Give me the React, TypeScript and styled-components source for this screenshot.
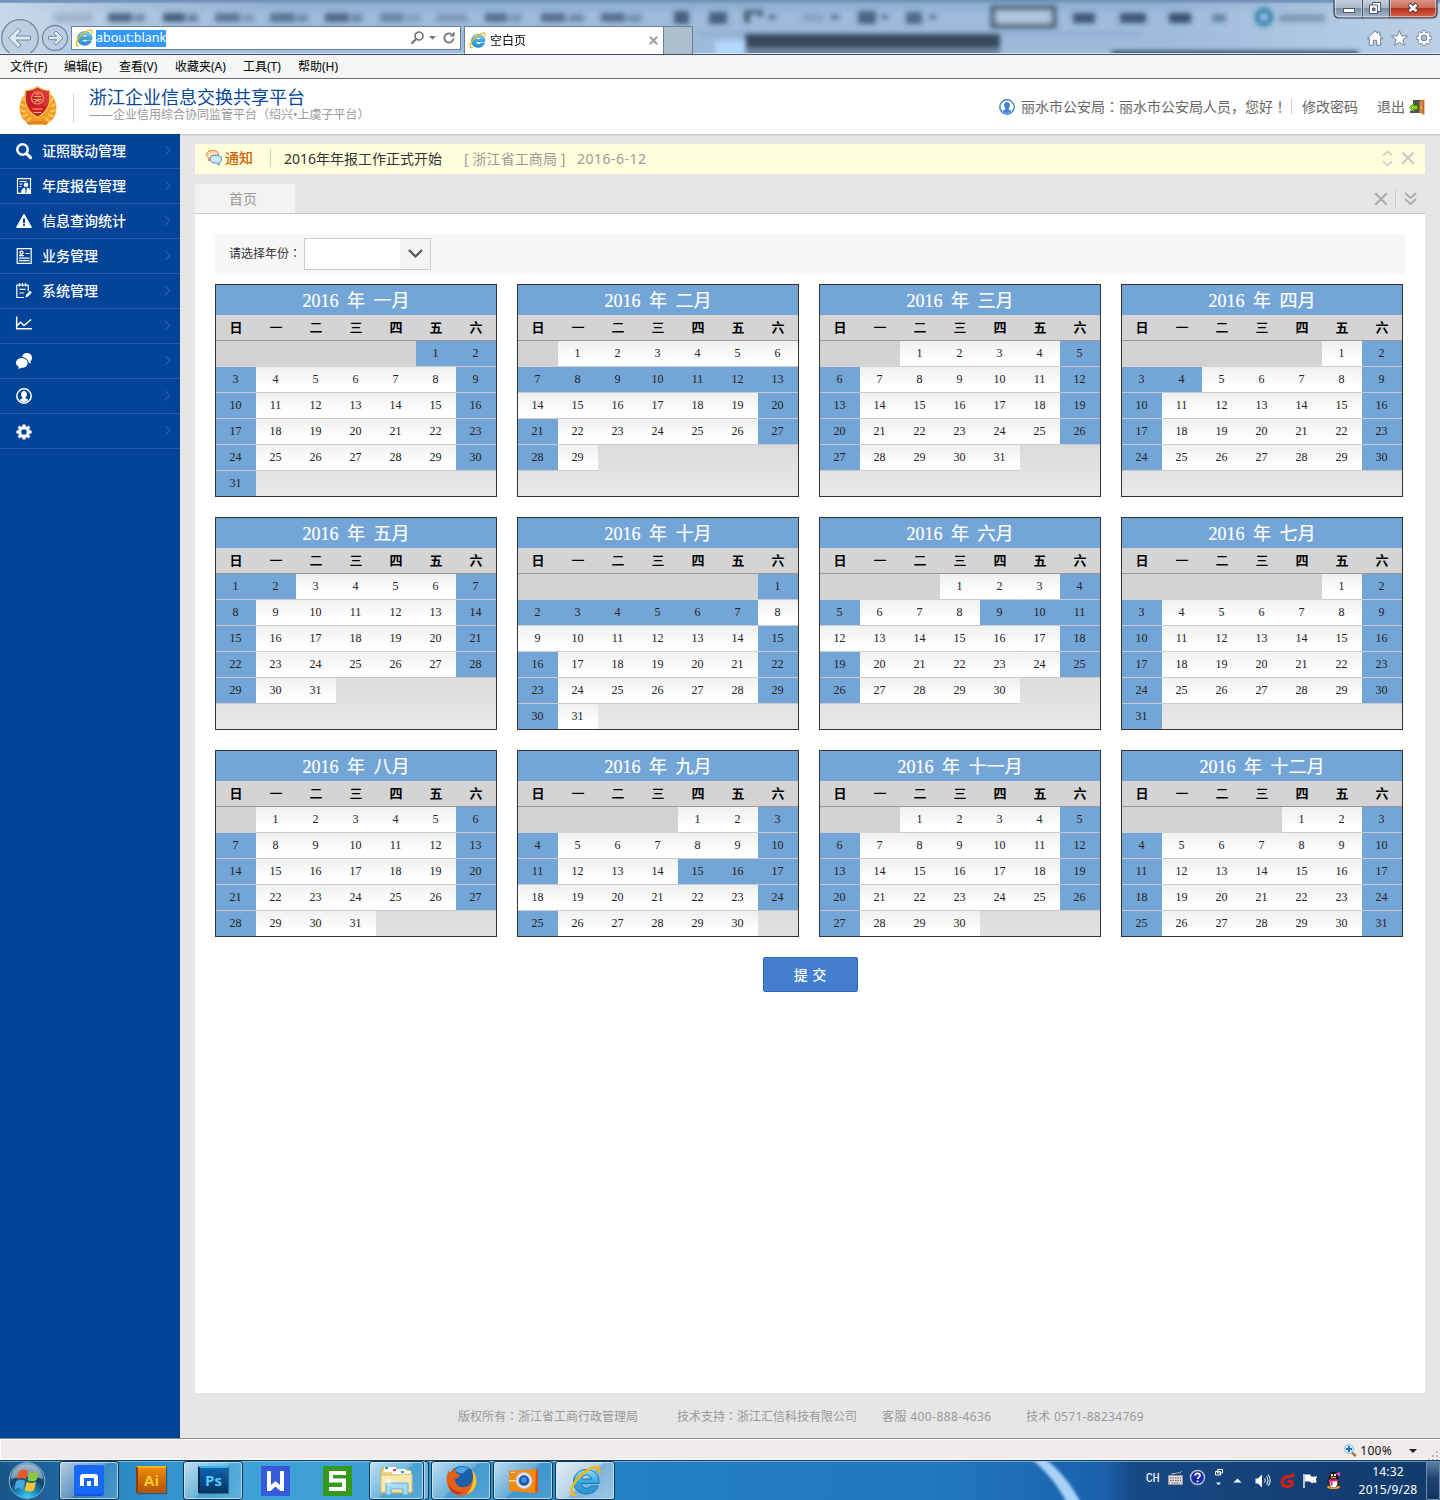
import React from "react";
import styled, { createGlobalStyle, css } from "styled-components";

const sans = `"Noto Sans", "Noto Sans CJK SC", sans-serif`;
const serif = `"Liberation Serif", "Noto Sans CJK SC", serif`;

const Global = createGlobalStyle`
  * { box-sizing: border-box; }
  body { margin: 0; font-family: ${sans}; font-size: 14px; background: #fff; }
  svg { display: block; flex: none; }
`;

const Screen = styled.div`
  width: 1440px;
  height: 1500px;
  display: flex;
  flex-direction: column;
  overflow: hidden;
`;

/* full-width punctuation centred in its cell */
const Punct = styled.span`
  font-family: "Noto Sans CJK TC", sans-serif;
  line-height: 1;
`;

/* ---------- browser chrome ---------- */
const Chrome = styled.div`
  position: relative;
  height: 55px;
  flex: none;
  display: flex;
  align-items: flex-start;
  padding: 26px 8px 0 0;
  border-bottom: 1px solid #3f4c60;
  background: linear-gradient(#6e8fb4 0, #8fb0d3 5px, #9dbbdb 14px, #9dbada 100%);
  overflow: hidden;
`;
const Glass = styled.svg`
  position: absolute;
  left: 0;
  top: 0;
`;
const NavButtons = styled.svg`
  position: relative;
  margin-top: -9px;
`;
const AddressBar = styled.div`
  position: relative;
  width: 390px;
  height: 24px;
  border: 1px solid #6b7f97;
  background: #fff;
  display: flex;
  align-items: center;
  padding: 0 4px 0 3px;
`;
const Url = styled.span`
  margin-left: 3px;
  height: 17px;
  line-height: 16px;
  font-size: 12.5px;
  color: #fff;
  background: #3399ff;
  margin-right: auto;
`;
const BrowserTab = styled.div`
  position: relative;
  margin-left: 3px;
  width: 200px;
  height: 28px;
  border: 1px solid #6b7f97;
  border-bottom: 0;
  background: #fff;
  display: flex;
  align-items: center;
  padding: 0 5px 0 4px;
  font-size: 12px;
  color: #000;
`;
const TabTitle = styled.span`
  margin: 0 auto 0 4px;
  line-height: 16px;
`;
const NewTab = styled.div`
  position: relative;
  width: 29px;
  height: 28px;
  border: 1px solid #6b7f97;
  border-width: 1px 1px 0 0;
  background: #aebfce;
`;
const ChromeTools = styled.div`
  position: relative;
  margin-left: auto;
  margin-top: 4px;
  display: flex;
  gap: 8px;
`;
const WindowButtons = styled.svg`
  position: absolute;
  right: 2px;
  top: 0;
`;
const MenuBar = styled.div`
  height: 24px;
  flex: none;
  background: #f6f6f6;
  border-bottom: 1px solid #6d6d6d;
  display: flex;
  padding-left: 10px;
  font-size: 12px;
  line-height: 24px;
  color: #000;
`;
const MenuEntry = styled.span<{ $w: number }>`
  width: ${(p) => p.$w}px;
  white-space: nowrap;
`;

/* ---------- site header ---------- */
const Header = styled.header`
  height: 55px;
  flex: none;
  background: #fff;
  display: flex;
  align-items: center;
  padding: 0 15px 0 18px;
`;
const Brand = styled.div`
  margin: -3px 0 0 15px;
  padding-left: 16px;
  position: relative;
  &::before {
    content: "";
    position: absolute;
    left: 0;
    top: 5px;
    height: 30px;
    border-left: 1px solid #d4d4d4;
  }
`;
const BrandTitle = styled.div`
  font-size: 18px;
  line-height: 19px;
  color: #05479a;
  white-space: nowrap;
`;
const BrandSub = styled.div`
  font-size: 12px;
  line-height: 15px;
  color: #999;
  white-space: nowrap;
`;
const Account = styled.div`
  margin-left: auto;
  display: flex;
  align-items: center;
  color: #666;
  line-height: 20px;
  white-space: nowrap;
`;
const Greeting = styled.span`
  width: 271px;
  margin-left: 6px;
  border-right: 1px solid #ccc;
  line-height: 15px;
`;
const AccountLink = styled.span<{ $ml: number }>`
  margin-left: ${(p) => p.$ml}px;
`;

/* ---------- body ---------- */
const Body = styled.div`
  height: 1304px;
  flex: none;
  display: flex;
`;
const Sidebar = styled.nav`
  width: 180px;
  background: #034499;
`;
const SideItem = styled.div`
  height: 35px;
  border-bottom: 1px solid #235ba5;
  display: flex;
  align-items: center;
  padding: 0 9px 1px 16px;
  color: #fff;
  font-weight: 500;
`;
const SideLabel = styled.span`
  margin: 0 auto 0 10px;
  line-height: 20px;
  padding-top: 1px;
`;
const Main = styled.main`
  flex: 1;
  background: #e6e6e6;
  border-top: 1px solid #ccc;
  box-shadow: inset 0 1px 0 #dadada;
  padding: 9px 15px 0;
  display: flex;
  flex-direction: column;
`;
const Notice = styled.div`
  height: 30px;
  background: #ffffdd;
  display: flex;
  align-items: center;
  padding: 0 10px 2px 11px;
  white-space: nowrap;
`;
const NoticeTag = styled.span`
  width: 46px;
  margin-left: 3px;
  height: 18px;
  line-height: 17px;
  color: #cc6200;
  font-weight: 500;
  border-right: 1px solid #b9dcae;
  margin-right: 13px;
`;
const NoticeText = styled.span<{ $w: number; $muted?: boolean; $ls?: number }>`
  width: ${(p) => p.$w}px;
  color: ${(p) => (p.$muted ? "#999" : "#333")};
  letter-spacing: ${(p) => p.$ls || 0}px;
`;
const NoticeTools = styled.div`
  margin-left: auto;
  display: flex;
  gap: 8px;
  align-items: center;
`;
const TabStrip = styled.div`
  margin-top: 10px;
  height: 30px;
  flex: none;
  border-bottom: 1px solid #ccc;
  display: flex;
  align-items: center;
  padding-right: 8px;
`;
const PageTab = styled.div`
  width: 100px;
  height: 29px;
  background: #f4f2f3;
  color: #999;
  line-height: 30px;
  padding-left: 34px;
  margin-right: auto;
`;
const StripDivider = styled.i`
  height: 19px;
  border-left: 1px solid #ccc;
  margin: 0 8px 0 7px;
`;
const Panel = styled.section`
  height: 1179px;
  flex: none;
  background: #fff;
  padding: 20px 20px 0;
  display: flex;
  flex-direction: column;
`;
const Filter = styled.div`
  height: 40px;
  flex: none;
  background: #f7f7f7;
  display: flex;
  align-items: center;
  padding-left: 14px;
  font-size: 12px;
  color: #333;
`;
const FilterLabel = styled.label`
  width: 75px;
  padding-bottom: 2px;
`;
const Select = styled.div`
  width: 127px;
  height: 32px;
  border: 1px solid #ccc;
  background: #fff;
  display: flex;
  justify-content: flex-end;
`;
const SelectArrow = styled.span`
  width: 30px;
  background: #f4f4f4;
  display: flex;
  align-items: center;
  justify-content: center;
`;
const Months = styled.div`
  margin-top: 10px;
  display: grid;
  grid-template-columns: repeat(4, 282px);
  gap: 20px;
`;
const Month = styled.div`
  border: 1px solid #333;
  background: linear-gradient(#d3d3d3 0, #d3d3d3 125px, #e9e9e9 211px);
  font-family: ${serif};
`;
const MonthTitle = styled.div`
  height: 30px;
  line-height: 31px;
  background: #74a5d7;
  color: #fff;
  font-size: 18px;
  word-spacing: 4px;
  text-align: center;
  padding-top: 1px;
  -webkit-text-stroke: 0.2px #fff;
`;
const Week = styled.div`
  display: grid;
  grid-template-columns: repeat(7, 40px);
`;
const WeekHead = styled(Week)`
  height: 26px;
  background: #d4d4d4;
  border-bottom: 1px solid #999;
  font-size: 13px;
  line-height: 25px;
  color: #000;
  text-align: center;
`;
const WeekName = styled.span<{ $thin: boolean }>`
  font-weight: ${(p) => (p.$thin ? 500 : 700)};
`;
const Day = styled.div<{ $kind: "blank" | "off" | "work"; $last: boolean }>`
  height: ${(p) => (p.$last ? 25 : 26)}px;
  line-height: 25px;
  text-align: center;
  font-size: 12px;
  color: #222;
  padding-right: 1px;
  ${(p) =>
    p.$kind !== "blank" &&
    css`
      background: ${p.$kind === "off" ? "#74a5d7" : "linear-gradient(#f0f0f0, #fff 80%)"};
      border-bottom: ${p.$last ? "0" : "1px solid #c9cbcd"};
    `}
`;
const Submit = styled.button`
  margin: 20px auto 0;
  position: relative;
  width: 95px;
  height: 35px;
  border: 1px solid #2c65b4;
  border-radius: 2px;
  background: #437fce;
  color: #fff;
  font: 500 14px/33px ${sans};
  word-spacing: 1px;
  padding: 0;
`;
const Footer = styled.footer`
  height: 45px;
  display: flex;
  font-size: 12px;
  line-height: 48px;
  color: #999;
  padding-left: 263px;
  white-space: nowrap;
`;
const FootItem = styled.span<{ $w: number; $ls?: number }>`
  width: ${(p) => p.$w}px;
  letter-spacing: ${(p) => p.$ls || 0}px;
`;

/* ---------- status bar and taskbar ---------- */
const StatusBar = styled.div`
  height: 22px;
  flex: none;
  background: #f0eceb;
  border-top: 1px solid #8b8b8b;
  box-shadow: inset 0 1px 0 #fff, inset 1px 0 0 #fff, inset 0 -1px 0 #fff;
  display: flex;
  align-items: center;
  justify-content: flex-end;
  font-size: 12px;
  color: #111;
  padding: 2px 1px 0 0;
`;
const Zoom = styled.span`
  margin: 0 17px 0 3px;
  line-height: 16px;
  letter-spacing: 0.3px;
`;
const Taskbar = styled.div`
  position: relative;
  height: 40px;
  flex: none;
  display: flex;
  align-items: center;
  border-top: 1px solid #17395c;
  box-shadow: inset 0 1px 0 rgba(160, 210, 240, 0.6);
  background: linear-gradient(
    90deg,
    #1a5589 0, #20659d 55px, #2a8ac6 122px, #3fa2d6 240px, #3d9fd3 360px,
    #2f8fcb 520px, #2280c3 640px, #2076bb 960px, #1b60ad 1105px, #174a86 1130px,
    #15427a 1250px, #123a6b 1440px
  );
`;
const Streak = styled.svg`
  position: absolute;
  left: 1010px;
  top: 0;
`;
const TaskButton = styled.div<{ $w?: number; $ml: number; $look?: "open" | "active" }>`
  position: relative;
  width: ${(p) => p.$w || 60}px;
  height: 39px;
  margin-left: ${(p) => p.$ml}px;
  display: flex;
  align-items: center;
  justify-content: center;
  ${(p) =>
    p.$look &&
    css`
      border: 1px solid #12344f;
      border-radius: 3px;
      box-shadow: inset 0 0 0 1px rgba(215, 238, 250, 0.7);
      background: ${p.$look === "active"
        ? "linear-gradient(135deg, #e4eef6 0, #b5d2e8 48%, #7db2da 52%, #9cc8e6 100%)"
        : "linear-gradient(135deg, rgba(255,255,255,.68) 0, rgba(255,255,255,.28) 48%, rgba(255,255,255,.08) 52%, rgba(255,255,255,.16) 100%)"};
    `}
`;
const StackEdge = styled.i`
  width: 5px;
  height: 39px;
  border: 1px solid #12344f;
  border-left: 1px solid rgba(215, 238, 250, 0.6);
  border-radius: 0 3px 3px 0;
  background: rgba(255, 255, 255, 0.25);
`;
const AppTile = styled.div<{ $edge: string; $face: string; $top: string; $ink: string }>`
  width: 30px;
  height: 27px;
  margin: -3px 0 0 -1px;
  border-top: 2px solid ${(p) => p.$top};
  border-left: 2px solid ${(p) => p.$edge};
  background: ${(p) => p.$face};
  color: ${(p) => p.$ink};
  font: 700 15px/24px "Open Sans", "Noto Sans", sans-serif;
  text-align: center;
  box-shadow: 1px 1px 1px rgba(0, 0, 0, 0.35);
`;
const Tray = styled.div`
  position: relative;
  margin-left: auto;
  height: 39px;
  display: flex;
  align-items: center;
  color: #fff;
`;
const Lang = styled.span`
  font: 12px/16px "Liberation Mono", monospace;
  letter-spacing: -0.6px;
  margin: 0 9px 4px 0;
`;
const Clock = styled.div`
  width: 76px;
  margin-left: 8px;
  font-size: 12px;
  letter-spacing: 0.2px;
  line-height: 18px;
  text-align: center;
  padding-top: 1px;
`;
const ShowDesktop = styled.i`
  width: 14px;
  height: 39px;
  border: 1px solid #6f90b3;
  border-radius: 2px;
  background: linear-gradient(#5c7fa6, #1f436f 45%, #14345f);
`;

/* ---------- icons ---------- */
const IeIcon = ({ s = 16 }: { s?: number }) => (
  <svg width={s} height={s} viewBox="0 0 32 32" fill="none">
    <defs>
      <linearGradient id="ieBlue" x1="0" y1="0" x2="0" y2="1">
        <stop offset="0" stopColor="#8fdcfa" />
        <stop offset=".5" stopColor="#35a8e4" />
        <stop offset="1" stopColor="#2c8ed0" />
      </linearGradient>
    </defs>
    <path
      fillRule="evenodd"
      d="M30 18.500H12.500c.3 3 2.300 4.700 5 4.700 2 0 3.400-.7 4.200-2.200h7.500c-1.500 5-6 8-11.700 8C9.900 29 4.500 24 4.500 16.800S9.900 4.500 17.500 4.500 30 9.800 30 16.500zM22.600 14c-.4-2.500-2.300-4-5-4s-4.600 1.500-5 4z"
      fill="url(#ieBlue)"
      stroke="#1b76b4"
      strokeWidth="1"
    />
    <path d="M29.500 8C31 4 29.500 1.500 26 2 19 3 8 12 3.500 21.500 1 27 2.500 31 7 29.500" stroke="#f2b90f" strokeWidth="2.600" />
  </svg>
);

const Emblem = () => (
  <svg width="40" height="42" viewBox="0 1.500 40 42" fill="none">
    <path d="M7 10C1 16 0 26 4 33c3 5 9 7 15.500 7S33 38 36 33c4-7 3-17-3-23z" fill="#f09a28" />
    <path d="M4 13l4 4M2 19l5 3M2 26l6 1M4 32l6-2M9 37l4-4M36 13l-4 4M38 19l-5 3M38 26l-6 1M36 32l-6-2M31 37l-4-4" stroke="#f8c858" strokeWidth="2" />
    <path d="M8 38c5-2 18-2 23 0l-3 2.500c-5-1-12-1-17 0z" fill="#e58213" />
    <path d="M19.500 1c3 3 8 4.500 12.500 4.500 1.500 9 2 20-12.500 28.500C5 25.500 5.500 14.500 7 5.500 11.500 5.500 16.500 4 19.500 1z" fill="#f3c04a" />
    <path d="M19.500 3c3 2.300 7 3.500 11.200 3.700 1.200 9.500.8 18.500-11.200 25.500C7.500 25.200 7.100 16.200 8.300 6.700c4.200-.2 8.200-1.400 11.200-3.700z" fill="#cb2026" />
    <path d="M19.500 3c3 2.300 7 3.500 11.200 3.700.7 6 .7 11-2.700 15.800-4-4-12-12-14-16.500 2.500-.7 3.500-1.500 5.500-3z" fill="#dd4440" opacity=".7" />
    <circle cx="19.500" cy="13.500" r="6" stroke="#e89060" strokeWidth="1.200" />
    <path d="M16 12h7M15.500 15h8M17.500 9.500h4M17 17.500l2.500-2 2.500 2" stroke="#f0b07a" strokeWidth="1.200" />
    <path d="M14.500 24.500h10M15.500 28h8" stroke="#f0b080" strokeWidth="1.200" />
  </svg>
);

const UserRing = ({ color, s = 16 }: { color: string; s?: number }) => (
  <svg width={s} height={s} viewBox="0 0 16 16">
    <circle cx="8" cy="8" r="7.200" fill="none" stroke={color} strokeWidth="1.400" />
    <path d="M8 3c1.900 0 2.900 1.300 2.900 3.200 0 1.400-.5 2.300-1.200 3v1.300l2.800 1.300C11.500 13.400 9.800 14.200 8 14.200s-3.500-.8-4.500-2.400l2.800-1.300V9.200C5.600 8.500 5.100 7.600 5.100 6.200 5.100 4.300 6.100 3 8 3z" fill={color} />
  </svg>
);

const Door = () => (
  <svg width="16" height="16" viewBox="0 0 16 16">
    <path d="M4 1h9v13H1v-2.500h3z" fill="#55504c" />
    <path d="M10.500 2.500L15.500.3v15.500l-5-2z" fill="#d9893c" />
    <path d="M14.300 1v14.500" stroke="#b5651d" strokeWidth="1" />
    <circle cx="12" cy="8.500" r=".7" fill="#ffe08a" />
    <path d="M.3 8.500L5 4.200v2.600h3.500v3.400H5v2.600z" fill="#8fd32a" stroke="#4f8f0c" strokeWidth=".8" />
  </svg>
);

const Chevron = () => (
  <svg width="7" height="11" viewBox="0 0 7 11" fill="none" stroke="#3a70b5">
    <path d="M1 .8L5.700 5.500 1 10.200" />
  </svg>
);

const Cross = ({ color, s = 14, w = 2 }: { color: string; s?: number; w?: number }) => (
  <svg width={s} height={s} viewBox="0 0 14 14" stroke={color} strokeWidth={w}>
    <path d="M1.300 1.300l11.400 11.400M12.700 1.300L1.300 12.700" />
  </svg>
);

const sideIcons: React.ReactNode[] = [
  <>
    <circle cx="6.500" cy="6.500" r="5.200" fill="none" stroke="#fff" strokeWidth="2.500" />
    <path d="M10.300 10.300l4.300 4.300" stroke="#fff" strokeWidth="3.200" strokeLinecap="round" />
  </>,
  <>
    <path d="M1.500.7h13v14.600h-13z" fill="none" stroke="#fff" strokeWidth="1.200" />
    <path d="M3.500 3.500h7M3.500 6h3M3.500 8.500h2" stroke="#fff" />
    <circle cx="10" cy="6.800" r="2.300" fill="#fff" />
    <path d="M5 15c0-3 1.500-5 3.500-5.500L10 12l1.500-2.500c2 .5 3 2.500 3 5.500z" fill="#fff" />
    <path d="M3 12.500h2M10 11v4" stroke="#034499" />
  </>,
  <>
    <path d="M8 1.200l7.500 13.300H.5z" fill="#fff" stroke="#fff" strokeLinejoin="round" />
    <path d="M8 5.500v4.800M8 11.300v1.700" stroke="#034499" strokeWidth="2" />
  </>,
  <>
    <path d="M1.200.7h14v14.600h-14z" fill="none" stroke="#fff" strokeWidth="1.200" />
    <circle cx="5.500" cy="4.700" r="1.500" fill="none" stroke="#fff" strokeWidth="1.300" />
    <path d="M3 7.700h5M9.500 5.500h4M3 10.200h10.500M3 12.700h10.500" stroke="#fff" strokeWidth="1.200" />
  </>,
  <>
    <path d="M8 14.500H.8V2.200h11.400V8M3.500 0v3.500M6.500 0v3.500M9.500 0v3.500M3.500 6.300h6M3.500 10h4.500" fill="none" stroke="#fff" strokeWidth="1.200" />
    <path d="M9.500 14.500l.8-3L14 7.800l1.800 1.700-3.700 4z" fill="#fff" />
  </>,
  <path d="M.7 0v12.300H16M1 9l3.500-3.300L8 9l7-6" transform="translate(0 -.5)" fill="none" stroke="#fff" strokeWidth="1.500" />,
  <>
    <path d="M10.500 0C13.800 0 16 2 16 4.700c0 1.600-.8 2.900-1.700 3.700l.7 2.100-2.800-1c-.7-3-3-5-6.200-5.200C6.500 1.600 8 0 10.500 0z" fill="#fff" />
    <path d="M5.500 5c3.700 0 6.200 2.200 6.200 5s-2.500 4.800-6 4.800L2.500 16l.3-2.300C1 12.800 0 11.500 0 10c0-2.800 2.300-5 5.500-5z" fill="#fff" />
    <path d="M5.500 4.500c3.700.2 6.500 2.200 6.800 5.500" fill="none" stroke="#034499" strokeWidth=".8" />
  </>,
  <>
    <circle cx="8" cy="8" r="7.200" fill="none" stroke="#fff" strokeWidth="1.500" />
    <path d="M8 3c1.900 0 2.900 1.300 2.900 3.200 0 1.400-.5 2.300-1.200 3v1.300l2.800 1.300C11.500 13.400 9.800 14.200 8 14.200s-3.500-.8-4.500-2.400l2.800-1.300V9.200C5.600 8.500 5.100 7.600 5.100 6.200 5.100 4.300 6.100 3 8 3z" fill="#fff" />
  </>,
  <>
    <circle cx="8" cy="8" r="4.400" fill="none" stroke="#fff" strokeWidth="3.200" />
    <path d="M8 .4v3M8 12.600v3M.4 8h3M12.600 8h3M2.600 2.600l2.200 2.200M11.200 11.200l2.200 2.200M2.600 13.400l2.200-2.200M11.200 4.800l2.200-2.200" stroke="#fff" strokeWidth="3" />
  </>,
];

const sideOffsets = [0, 0, 0, 0, 0, -2, 0, 1, 2];
const sideLabels = ["证照联动管理", "年度报告管理", "信息查询统计", "业务管理", "系统管理", "", "", "", ""];

const SideGlyph = styled.svg<{ $dy: number }>`
  margin-top: ${(p) => p.$dy}px;
  overflow: visible;
`;

/* ---------- data ---------- */
type MonthData = { name: string; first: number; days: number; rows: number; off?: number[]; work?: number[] };
const months: MonthData[] = [
  { name: "一月", first: 5, days: 31, rows: 6, off: [1] },
  { name: "二月", first: 1, days: 29, rows: 6, off: [8, 9, 10, 11, 12], work: [6, 14] },
  { name: "三月", first: 2, days: 31, rows: 6 },
  { name: "四月", first: 5, days: 30, rows: 6, off: [4] },
  { name: "五月", first: 0, days: 31, rows: 6, off: [2] },
  { name: "十月", first: 6, days: 31, rows: 6, off: [3, 4, 5, 6, 7], work: [8, 9] },
  { name: "六月", first: 3, days: 30, rows: 6, off: [9, 10], work: [12] },
  { name: "七月", first: 5, days: 31, rows: 6 },
  { name: "八月", first: 1, days: 31, rows: 5 },
  { name: "九月", first: 4, days: 30, rows: 5, off: [15, 16], work: [18] },
  { name: "十一月", first: 2, days: 30, rows: 5 },
  { name: "十二月", first: 4, days: 31, rows: 5 },
];
const weekdays = ["日", "一", "二", "三", "四", "五", "六"];

const MonthCard = ({ m }: { m: MonthData }) => (
  <Month>
    <MonthTitle>2016 年 {m.name}</MonthTitle>
    <WeekHead>
      {weekdays.map((d, i) => (
        <WeekName key={d} $thin={i > 0 && i < 4}>
          {d}
        </WeekName>
      ))}
    </WeekHead>
    <Week>
      {Array.from({ length: m.rows * 7 }, (_, i) => {
        const day = i - m.first + 1;
        const last = i >= (m.rows - 1) * 7;
        if (day < 1 || day > m.days) return <Day key={i} $kind="blank" $last={last} />;
        const weekend = i % 7 === 0 || i % 7 === 6;
        const off = (weekend && !m.work?.includes(day)) || m.off?.includes(day);
        return (
          <Day key={i} $kind={off ? "off" : "work"} $last={last}>
            {day}
          </Day>
        );
      })}
    </Week>
  </Month>
);

const blurMarks: [number, number, number, number, number][] = [
  [54, 13, 38, 9, 0.2], [108, 13, 24, 9, 0.75], [134, 14, 11, 8, 0.45], [163, 13, 22, 9, 0.8], [187, 14, 11, 8, 0.5],
  [215, 13, 25, 9, 0.6], [242, 14, 12, 8, 0.3], [270, 13, 25, 9, 0.6], [297, 14, 11, 8, 0.4], [325, 13, 24, 9, 0.7],
  [351, 14, 11, 8, 0.45], [380, 13, 24, 9, 0.45], [406, 14, 14, 8, 0.25], [437, 14, 30, 8, 0.3],
  [485, 13, 22, 9, 0.65], [509, 14, 13, 8, 0.3], [541, 13, 24, 9, 0.65], [568, 14, 16, 8, 0.4],
  [601, 13, 24, 9, 0.65], [627, 14, 15, 8, 0.35], [674, 11, 15, 13, 0.8], [709, 12, 18, 12, 0.8], [768, 15, 8, 4, 0.7], [802, 14, 22, 7, 0.2],
  [831, 15, 8, 4, 0.7], [858, 11, 18, 13, 0.75], [881, 15, 7, 4, 0.7], [906, 12, 16, 12, 0.7], [929, 15, 7, 4, 0.7],
  [1073, 13, 22, 10, 0.85], [1120, 13, 26, 10, 0.85], [1169, 13, 22, 10, 0.9], [1212, 14, 14, 8, 0.5], [1279, 14, 46, 8, 0.35],
];

export default function App() {
  return (
    <Screen>
      <Global />
      <Chrome>
        <Glass width="1440" height="54" viewBox="0 0 1440 54">
          <defs>
            <filter id="soft" x="-5%" y="-50%" width="110%" height="200%">
              <feGaussianBlur stdDeviation="2.600" />
            </filter>
            <linearGradient id="sheen">
              <stop offset="0" stopColor="#d5e1ee" stopOpacity=".8" />
              <stop offset=".1" stopColor="#d0deee" stopOpacity=".3" />
              <stop offset=".2" stopColor="#d0deee" stopOpacity="0" />
              <stop offset=".8" stopColor="#d0deee" stopOpacity="0" />
              <stop offset="1" stopColor="#cfdeef" stopOpacity=".6" />
            </linearGradient>
          </defs>
          <rect y="3" width="1440" height="51" fill="url(#sheen)" />
          <g filter="url(#soft)">
            {blurMarks.map(([x, y, w, h, o]) => (
              <rect key={x} x={x} y={y} width={w} height={h} fill="#2e4765" opacity={o} />
            ))}
            <path d="M746 22V12h15v5M748 14v9" fill="none" stroke="#33475f" strokeWidth="4" opacity=".8" />
            <rect x="993" y="8" width="61" height="18" fill="#b7c9de" stroke="#33475f" strokeWidth="5" opacity=".8" />
            <rect x="700" y="33" width="440" height="1.500" fill="#6688ad" opacity=".6" />
            <rect x="715" y="41" width="30" height="14" fill="#b4d8ff" />
            <rect x="745" y="34" width="255" height="14" fill="#38495c" />
            <rect x="745" y="48" width="255" height="8" fill="#6e839e" />
            <rect x="1112" y="51" width="246" height="8" fill="#33475f" />
            <circle cx="1264" cy="17" r="7" fill="none" stroke="#227ba9" strokeWidth="4.500" />
            <rect x="60" y="50" width="500" height="3" fill="#9dc8f5" />
          </g>
          <rect y="53" width="1440" height="1" fill="#dce6f2" />
        </Glass>
        <NavButtons width="71" height="36" viewBox="0 17 71 36" fill="none">
          <circle cx="20" cy="38" r="18.300" fill="#b8c9dc" fillOpacity=".55" stroke="#74899f" strokeWidth="1.300" />
          <circle cx="55" cy="38" r="12.500" fill="#b8c9dc" fillOpacity=".55" stroke="#74899f" strokeWidth="1.300" />
          <path d="M8.500 38l9.500-9.700 3 2.700-5 5h14.500v4H16l5 5-3 2.700z" fill="#e1e8f0" stroke="#7388a2" strokeLinejoin="round" />
          <path d="M63 38l-7-7-2.300 2.300 3 3h-8.200v3.400h8.200l-3 3L56 45z" fill="#e1e8f0" stroke="#7388a2" strokeLinejoin="round" />
        </NavButtons>
        <AddressBar>
          <IeIcon s={18} />
          <Url>about:blank</Url>
          <svg width="46" height="16" viewBox="0 0 46 16" fill="none" stroke="#777">
            <circle cx="9" cy="6" r="4" strokeWidth="1.700" />
            <path d="M6 9l-4.500 4.700" strokeWidth="2.200" />
            <path d="M19 6h7l-3.500 3.800z" fill="#777" stroke="none" />
            <path d="M43.500 8.500a4.600 4.600 0 1 1-2-4.300" strokeWidth="1.900" />
            <path d="M44.500 1.500v5h-5z" fill="#777" stroke="none" />
          </svg>
        </AddressBar>
        <BrowserTab>
          <IeIcon s={17} />
          <TabTitle>空白页</TabTitle>
          <Cross color="#a2a2a2" s={9} w={3.4} />
        </BrowserTab>
        <NewTab />
        <ChromeTools>
          <svg width="16" height="16" viewBox="0 0 16 16" fill="#fff" stroke="#66778c" strokeWidth=".9">
            <path d="M8 .8l2.500 2.500V2h2.300v3.500L15.600 8.500h-2v6.800H9.700v-5H6.300v5H2.400V8.500h-2z" />
          </svg>
          <svg width="17" height="16" viewBox="0 0 17 16" fill="#fff" stroke="#66778c" strokeWidth=".9">
            <path d="M8.500.6l2.100 5.200 5.800.3-4.500 3.700 1.500 5.600-4.900-3.100-4.900 3.100 1.500-5.600L.6 6.100l5.800-.3z" />
          </svg>
          <svg width="16" height="16" viewBox="0 0 16 16" fill="none">
            <path d="M8 .2v15.600M.2 8h15.600M2.500 2.500l11 11M13.500 2.500l-11 11" stroke="#77879b" strokeWidth="3.600" />
            <circle cx="8" cy="8" r="4.400" stroke="#77879b" strokeWidth="4" />
            <path d="M8 .9v3M8 12v3M.9 8h3M12 8h3M3 3l2 2M11 11l2 2M13 3l-2 2M5 11l-2 2" stroke="#fff" strokeWidth="2.200" />
            <circle cx="8" cy="8" r="4.400" stroke="#fff" strokeWidth="2.400" />
            <circle cx="8" cy="8" r="2.700" fill="#9dbbdb" stroke="#77879b" strokeWidth=".7" />
          </svg>
        </ChromeTools>
        <WindowButtons width="105" height="19" viewBox="0 0 105 19" fill="none">
          <defs>
            <linearGradient id="ctl" x1="0" y1="0" x2="0" y2="1">
              <stop offset="0" stopColor="#c8d3df" />
              <stop offset=".45" stopColor="#a8b8ca" />
              <stop offset=".5" stopColor="#7c90a8" />
              <stop offset="1" stopColor="#a7bace" />
            </linearGradient>
            <linearGradient id="cls" x1="0" y1="0" x2="0" y2="1">
              <stop offset="0" stopColor="#dd9b8e" />
              <stop offset=".45" stopColor="#c96a58" />
              <stop offset=".5" stopColor="#b53020" />
              <stop offset="1" stopColor="#d9694a" />
            </linearGradient>
          </defs>
          <path d="M1-1v14q0 5 5 5h51V-1z" fill="url(#ctl)" />
          <path d="M57-1v19h42q5 0 5-5V-1z" fill="url(#cls)" />
          <path d="M1-1v14q0 5 5 5h93q5 0 5-5V-1M29.500 0v18M56.500 0v18" stroke="#39485c" strokeWidth="1.200" />
          <path d="M30.500 0v17M28.500 0v17M57.500 0v17M2.500 0v13q0 3.500 3.500 3.500h93q3.500 0 3.500-3.500V0" stroke="#dfe7ee" strokeOpacity=".6" />
          <rect x="10.500" y="8.500" width="11" height="4" fill="#fff" stroke="#4b586c" />
          <path d="M39.500 2.500h8v9h-8z" fill="#fff" stroke="#4b586c" />
          <path d="M36.500 5h8v8.500h-8z" fill="#fff" stroke="#4b586c" />
          <path d="M39.500 8h2.500v2.500h-2.500z" fill="#7c90a8" stroke="#4b586c" />
          <path d="M76 4.200l8 7.600M84 4.200l-8 7.600" stroke="#573036" strokeWidth="4.500" />
          <path d="M76.500 4.700l7 6.600M83.500 4.700l-7 6.600" stroke="#fff" strokeWidth="2.600" />
        </WindowButtons>
      </Chrome>
      <MenuBar>
        <MenuEntry $w={54}>文件(F)</MenuEntry>
        <MenuEntry $w={55}>编辑(E)</MenuEntry>
        <MenuEntry $w={56}>查看(V)</MenuEntry>
        <MenuEntry $w={68}>收藏夹(A)</MenuEntry>
        <MenuEntry $w={55}>工具(T)</MenuEntry>
        <MenuEntry $w={55}>帮助(H)</MenuEntry>
      </MenuBar>

      <Header>
        <Emblem />
        <Brand>
          <BrandTitle>浙江企业信息交换共享平台</BrandTitle>
          <BrandSub>——企业信用综合协同监管平台（绍兴•上虞子平台）</BrandSub>
        </Brand>
        <Account>
          <UserRing color="#3f82d8" />
          <Greeting>
            丽水市公安局<Punct lang="zh-TW">：</Punct>丽水市公安局人员，您好<Punct lang="zh-TW">！</Punct>
          </Greeting>
          <AccountLink $ml={10}>修改密码</AccountLink>
          <AccountLink $ml={19}>退出</AccountLink>
          <AccountLink $ml={4}>
            <Door />
          </AccountLink>
        </Account>
      </Header>

      <Body>
        <Sidebar>
          {sideIcons.map((icon, i) => (
            <SideItem key={i}>
              <SideGlyph $dy={sideOffsets[i]} width="16" height="16" viewBox="0 0 16 16">
                {icon}
              </SideGlyph>
              <SideLabel>{sideLabels[i]}</SideLabel>
              <Chevron />
            </SideItem>
          ))}
        </Sidebar>
        <Main>
          <Notice>
            <svg width="16" height="16" viewBox="0 0 16 16">
              <path d="M5.500.6h2.800c2.400 0 4 1.600 4 3.700s-1.600 4.200-4 4.200H5L2.800 11V8C1.300 7.300.6 6 .6 4.500.6 2.200 2.700.6 5.500.6z" fill="#ffe0a8" stroke="#e8703c" />
              <path d="M8.500 5.300H11c2.700 0 4.500 1.600 4.500 3.900 0 1.700-.9 3-2.300 3.600v2.500L10.700 13H8.500c-2.700 0-4.400-1.600-4.400-3.900s1.700-3.800 4.400-3.800z" fill="#cdeaff" stroke="#3484cc" />
            </svg>
            <NoticeTag>通知</NoticeTag>
            <NoticeText $w={180}>2016年年报工作正式开始</NoticeText>
            <NoticeText $w={113} $muted $ls={0.1}>[ 浙江省工商局 ]</NoticeText>
            <NoticeText $w={80} $muted $ls={0.5}>2016-6-12</NoticeText>
            <NoticeTools>
              <svg width="11" height="17" viewBox="0 0 11 17" fill="none" stroke="#c4c4c4" strokeWidth="1.300">
                <path d="M1.200 5.500l4.300-4 4.300 4M1.200 11.500l4.300 4 4.300-4" />
              </svg>
              <Cross color="#c8c8c8" />
            </NoticeTools>
          </Notice>
          <TabStrip>
            <PageTab>首页</PageTab>
            <Cross color="#adadad" w={2.2} />
            <StripDivider />
            <svg width="13" height="14" viewBox="0 0 13 14" fill="none" stroke="#adadad" strokeWidth="2">
              <path d="M1 1l5.500 5L12 1M1 7l5.500 5L12 7" />
            </svg>
          </TabStrip>
          <Panel>
            <Filter>
              <FilterLabel>
                请选择年份<Punct lang="zh-TW">：</Punct>
              </FilterLabel>
              <Select>
                <SelectArrow>
                  <svg width="15" height="10" viewBox="0 0 15 10" fill="none" stroke="#555" strokeWidth="2.200">
                    <path d="M1 1l6.500 6.500L14 1" />
                  </svg>
                </SelectArrow>
              </Select>
            </Filter>
            <Months>
              {months.map((m) => (
                <MonthCard key={m.name} m={m} />
              ))}
            </Months>
            <Submit>提 交</Submit>
          </Panel>
          <Footer>
            <FootItem $w={219}>
              版权所有<Punct lang="zh-TW">：</Punct>浙江省工商行政管理局
            </FootItem>
            <FootItem $w={205}>
              技术支持<Punct lang="zh-TW">：</Punct>浙江汇信科技有限公司
            </FootItem>
            <FootItem $w={144} $ls={0.4}>客服 400-888-4636</FootItem>
            <FootItem $w={130} $ls={0.28}>技术 0571-88234769</FootItem>
          </Footer>
        </Main>
      </Body>

      <StatusBar>
        <svg width="13" height="13" viewBox="0 0 13 13">
          <path d="M7.500 8l4.300 4.200" stroke="#b0713a" strokeWidth="2.400" />
          <circle cx="5" cy="5" r="4.500" fill="#d8ecfb" stroke="#9ab8cf" />
          <path d="M5 2v6M2 5h6" stroke="#1373c4" strokeWidth="2" />
        </svg>
        <Zoom>100%</Zoom>
        <svg width="30" height="18" viewBox="0 0 30 18">
          <path d="M0 7h8l-4 4z" fill="#222" />
          <path d="M27 9h2v2h-2zM23 13h2v2h-2zM27 13h2v2h-2zM19 17h2v1h-2zM23 17h2v1h-2zM27 17h2v1h-2z" fill="#bbb" />
        </svg>
      </StatusBar>

      <Taskbar>
        <Streak width="110" height="39" viewBox="0 0 110 39">
          <defs>
            <filter id="glow" x="-20%" y="-20%" width="140%" height="140%">
              <feGaussianBlur stdDeviation="1.600" />
            </filter>
          </defs>
          <path d="M19-4C34 8 47 22 58 44h14C62 24 50 9 33-4z" fill="#a9d2f8" filter="url(#glow)" />
        </Streak>
        <svg width="54" height="39" viewBox="0 0 54 39">
          <defs>
            <radialGradient id="orb" cx=".5" cy="1" r="1">
              <stop offset="0" stopColor="#39d8f8" />
              <stop offset=".35" stopColor="#1b7fb0" />
              <stop offset=".6" stopColor="#0e4169" />
              <stop offset="1" stopColor="#7e9fb8" />
            </radialGradient>
          </defs>
          <circle cx="27" cy="19.500" r="17.800" fill="url(#orb)" stroke="#7fb2d4" />
          <path d="M11 18C12 8 19 3.500 27 3.500S42 8 43 18c-9-3-23-3-32 0z" fill="#dfeaf2" opacity=".45" />
          <path d="M19 10c3-2 6-2 9 0l-2.200 8.500c-3-2-6-2-9 0z" fill="#e8582c" />
          <path d="M29.500 10.700c3 1.800 6 1.800 9.500 0l-2.300 8.300c-3.300 1.700-6.300 1.800-9.300 0z" fill="#8ac83e" />
          <path d="M16.200 20c3-2 6-2 9 0L23 28.500c-3-2-6-2-9 0z" fill="#4aa5e0" />
          <path d="M26.800 20.800c3 1.700 6 1.700 9.300 0L34 29.200c-3.300 1.800-6.300 1.700-9.300 0z" fill="#fcc52c" />
        </svg>
        <TaskButton $ml={5} $look="open">
          <svg width="30" height="31" viewBox="0 0 30 31">
            <rect width="30" height="31" rx="3" fill="#0d55dd" />
            <rect width="30" height="29" rx="3" fill="#1768f7" />
            <path d="M6 21V12q0-3 3-3h12q3 0 3 3v9h-4v-8H10v8zM13 16h4v5h-4z" fill="#fff" />
          </svg>
        </TaskButton>
        <TaskButton $ml={2}>
          <AppTile $edge="#8f3c05" $top="#f9b51c" $face="linear-gradient(#ea8a08,#b3510a)" $ink="#ffc82e">Ai</AppTile>
        </TaskButton>
        <TaskButton $ml={2} $look="open">
          <AppTile $edge="#04284a" $top="#33b5ee" $face="linear-gradient(#0b63ac,#063463)" $ink="#55c9f7">Ps</AppTile>
        </TaskButton>
        <TaskButton $ml={2}>
          <svg width="29" height="30" viewBox="0 0 29 30">
            <rect width="29" height="30" fill="#355bdc" />
            <path d="M6 5h4v14l4.500-4 4.500 4V5h4v20h-3.500l-5-4.500-5 4.500H6z" fill="#fff" />
          </svg>
        </TaskButton>
        <TaskButton $ml={2}>
          <svg width="29" height="30" viewBox="0 0 29 30">
            <rect width="29" height="30" fill="#359a1c" />
            <path d="M23 7H8v7.500h13V23H6" fill="none" stroke="#fff" strokeWidth="4" />
          </svg>
        </TaskButton>
        <TaskButton $ml={2} $w={55} $look="open">
          <svg width="33" height="31" viewBox="0 0 33 31">
            <path d="M1 5q0-2 2-2h4l1 1h7l1 1h13q2 0 2 2v21H1z" fill="#ecd385" stroke="#c9a850" />
            <path d="M4 2h12v5H4zM12 4h14v5H12zM19 6h12v4H19z" fill="#fff" />
            <path d="M5 2h3v2H5z" fill="#3a3" />
            <path d="M13 4h3v2h-3z" fill="#d43" />
            <path d="M21 6h3v2h-3z" fill="#39d" />
            <path d="M1 10h19l2-1h10v18H1z" fill="#f6e9ab" stroke="#dcc377" />
            <path d="M6 30V18h22v12h-5v-6H11v6z" fill="#a5dbf2" stroke="#65aeda" />
            <path d="M9 12v9M4.500 16.500h9M6 13.500l6 6M12 13.500l-6 6" stroke="#fff" strokeWidth=".8" />
          </svg>
        </TaskButton>
        <StackEdge />
        <TaskButton $ml={2} $look="open">
          <svg width="31" height="31" viewBox="0 0 31 31">
            <circle cx="16" cy="14.500" r="13.500" fill="#1a5fa8" />
            <path d="M9 5c3-4 10-4 14-1-4 0-3 3-6 4s-6-1-8-3z" fill="#4fa5dd" />
            <path d="M26 5c5 5 6 13 2 19-5 7-16 9-22 3C0 22-1 13 3 5c0 2 1 3 2 3 1-2 3-4 5-4-1 3 0 5 4 6-1 3-4 3-5 4 0 6 5 9 9 8 7 0 11-8 8-17z" fill="#e65f17" />
            <path d="M26 5c5 5 6 13 2 19-2 3-5 4.500-8 5.500 6-5 9-15 6-24.500z" fill="#fbc53a" />
            <path d="M3 19c3 6 9 9 15 8-3 3-9 3-13-1-1-2-2-4-2-7z" fill="#c8391b" />
          </svg>
        </TaskButton>
        <TaskButton $ml={2} $look="open">
          <svg width="31" height="26" viewBox="0 0 31 26">
            <path d="M1 3l27-2 2 1v22l-3 1-26-2z" fill="#f58a12" />
            <path d="M28 1l2 1v22l-3 1z" fill="#d7540a" />
            <path d="M3 4h4v1H3zM1 12h9v1.500H1z" fill="#ffe6b0" />
            <circle cx="16" cy="12.500" r="8" fill="#e6ebf0" stroke="#b6bec8" />
            <circle cx="16" cy="12.500" r="5.200" fill="#1d4f9e" stroke="#6d8bb5" />
            <circle cx="16" cy="12" r="3" fill="#3f8df0" />
          </svg>
        </TaskButton>
        <TaskButton $ml={2} $look="active">
          <IeIcon s={32} />
        </TaskButton>

        <Tray>
          <Lang>CH</Lang>
          <svg width="96" height="39" viewBox="1168 1461 96 39" fill="none">
            <path d="M1168.500 1475.500h14v9h-14z" fill="#d8d8d8" stroke="#999" />
            <path d="M1170 1478h11M1170 1480.500h11M1171.500 1483h8" stroke="#666" strokeDasharray="1.500 1" />
            <path d="M1172 1475v-1.500h4l2-1 2 .5 2-2" stroke="#aab" />
            <circle cx="1197.500" cy="1477.500" r="7" fill="#1a28b0" stroke="#b8bfc9" strokeWidth="1.500" />
            <path d="M1195 1475.800c.2-3.200 5.200-3 5-.2-.2 1.500-2.400 1.600-2.400 3.500M1197.600 1480.500v1.800" stroke="#fff" strokeWidth="1.700" />
            <path d="M1217.500 1469.500h5v3.500h-5zM1215.500 1471.500h5v3.500h-5z" fill="#15427a" stroke="#fff" />
            <path d="M1216 1482.500h5l-2.500 2.700zM1233.500 1482.500h8l-4-4z" fill="#fff" />
            <path d="M1255.500 1478.500h2.500l4-4v13l-4-4h-2.500z" fill="#fff" />
          </svg>
          <svg width="78" height="39" viewBox="1264 1461 78 39" fill="none">
            <path d="M1264.500 1478.500q1.500 2 0 4M1266.500 1476.500q3 4 0 8M1268 1474.500q4.500 6 0 11.500" stroke="#dfe8f2" strokeWidth="1.100" />
            <path d="M1292 1476.500c-5-1-10 1.500-10 5.500 0 4.500 7 6 10 3v-3.500h-4.500" stroke="#d81f14" strokeWidth="3" />
            <path d="M1288 1477l4.500-3.500 1.500-.5v4z" fill="#d81f14" />
            <path d="M1304 1474v14" stroke="#fff" strokeWidth="1.400" />
            <path d="M1305 1474.500h5.500v1.500l2 .8 4.500-.5-1 3 .5 3.200-5 .5-1.500-1.500h-5z" fill="#fff" />
            <ellipse cx="1333.500" cy="1487" rx="6.500" ry="2" fill="#f3a51c" />
            <ellipse cx="1333.500" cy="1481.500" rx="6" ry="6.200" fill="#171717" />
            <ellipse cx="1333.500" cy="1483" rx="4" ry="4.500" fill="#fff" />
            <circle cx="1333.500" cy="1476" r="4.200" fill="#171717" />
            <path d="M1332 1474v2M1335 1474v2" stroke="#fff" strokeWidth="1.800" />
            <path d="M1331 1477.500h5" stroke="#f3a51c" strokeWidth="1.400" />
            <path d="M1328.500 1479.500h10v2h-6v4h-2v-4h-2z" fill="#e8288a" />
            <path d="M1335.500 1473.500l4.500-1.500v4.500z" fill="#f04aa6" />
          </svg>
          <Clock>
            14:32
            <br />
            2015/9/28
          </Clock>
          <ShowDesktop />
        </Tray>
      </Taskbar>
    </Screen>
  );
}
